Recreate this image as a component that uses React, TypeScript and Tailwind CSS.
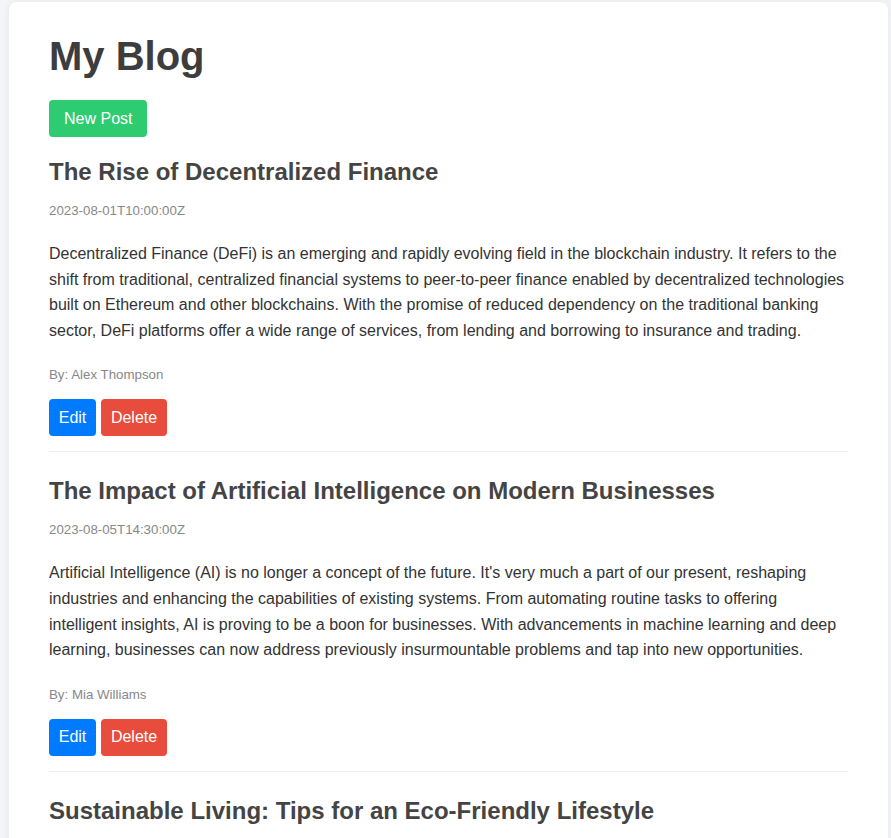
const posts = [
  {
    title: "The Rise of Decentralized Finance",
    date: "2023-08-01T10:00:00Z",
    body: "Decentralized Finance (DeFi) is an emerging and rapidly evolving field in the blockchain industry. It refers to the shift from traditional, centralized financial systems to peer-to-peer finance enabled by decentralized technologies built on Ethereum and other blockchains. With the promise of reduced dependency on the traditional banking sector, DeFi platforms offer a wide range of services, from lending and borrowing to insurance and trading.",
    author: "Alex Thompson",
  },
  {
    title: "The Impact of Artificial Intelligence on Modern Businesses",
    date: "2023-08-05T14:30:00Z",
    body: "Artificial Intelligence (AI) is no longer a concept of the future. It's very much a part of our present, reshaping industries and enhancing the capabilities of existing systems. From automating routine tasks to offering intelligent insights, AI is proving to be a boon for businesses. With advancements in machine learning and deep learning, businesses can now address previously insurmountable problems and tap into new opportunities.",
    author: "Mia Williams",
  },
  {
    title: "Sustainable Living: Tips for an Eco-Friendly Lifestyle",
    date: "2023-08-10T09:15:00Z",
    body: "Sustainable living is about making choices that reduce our impact on the environment. Small changes in daily habits, from cutting down on single-use plastics to choosing local produce, can add up to a big difference over time.",
    author: "Liam Carter",
  },
];

export default function App() {
  return (
    <div className="min-h-screen bg-[#f4f5f8] pt-[2px] pl-[9px] pr-[3px] font-['Liberation_Sans',Arial,sans-serif]">
      <div className="rounded-lg bg-white px-[40px] pt-[31px] pb-10 shadow-[0_0_10px_rgba(0,0,0,0.06)]">
        <h1 className="text-[40px] leading-[46px] font-bold text-[#3d3d3d]">My Blog</h1>

        <button className="mt-[21px] h-[37px] rounded bg-[#2ecc71] px-[15px] text-[16px] text-white">
          New Post
        </button>

        <div className="mt-[21px]">
          {posts.map((p, idx) => (
            <article
              key={p.title}
              className={idx < posts.length - 1 ? "mb-[25px] border-b border-[#eeeeee] pb-[15px]" : ""}
            >
              <h2 className="text-[24px] leading-[28px] font-bold text-[#444]">{p.title}</h2>
              <div className="mt-[17px] text-[13.3px] leading-[16px] text-[#888]">{p.date}</div>
              <p className="mt-[22px] text-[16px] leading-[1.6] text-[#333]">{p.body}</p>
              <div className="mt-[24px] text-[13.3px] leading-[16px] text-[#888]">By: {p.author}</div>
              <div className="mt-[16px] flex gap-[5px]">
                <button className="h-[37px] w-[47px] rounded bg-[#007bff] text-[16px] text-white">Edit</button>
                <button className="h-[37px] w-[66px] rounded bg-[#e74c3c] text-[16px] text-white">Delete</button>
              </div>
            </article>
          ))}
        </div>
      </div>
    </div>
  );
}
